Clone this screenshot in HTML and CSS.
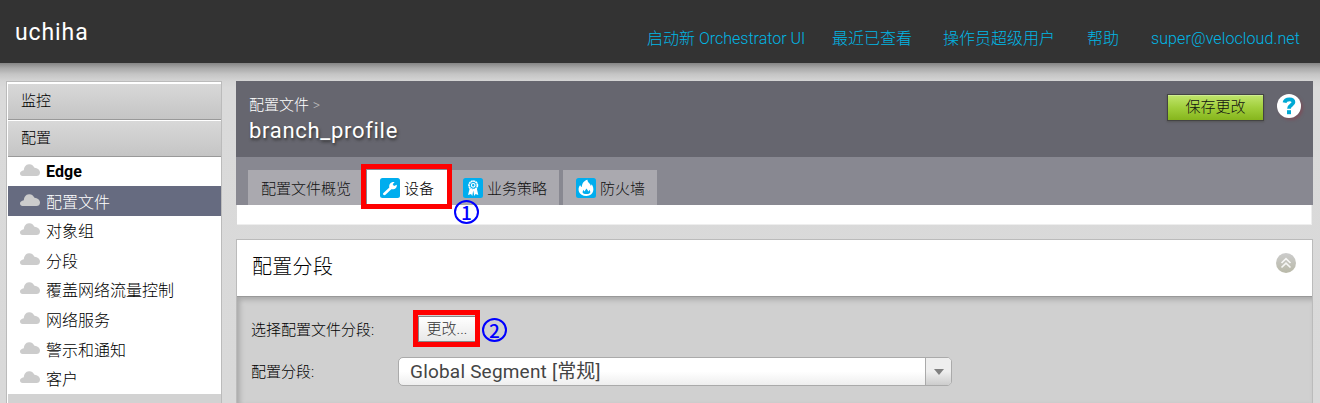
FILE: index.html
```html
<!DOCTYPE html>
<html lang="zh-CN">
<head>
<meta charset="utf-8">
<title>branch_profile</title>
<link rel="stylesheet" href="styles.css">
</head>
<body>
<svg class="defs" width="0" height="0">
  <symbol id="cloud" viewBox="0 0 20 12"><path d="M2.500 12C1 12 0 11 0 9.500C0 7.700 1.500 6.800 3.800 6.200C4.200 3.200 5.500 .5 9 .3C12 .2 13.300 1.800 14.500 3.800C17.500 4.200 20 5.800 20 8.500C20 11 18.500 12 16.500 12Z"/></symbol>
</svg>
<header class="topbar">
  <div class="brand">uchiha</div>
  <nav class="topnav">
    <a class="nav-ui">启动新 Orchestrator UI</a>
    <a class="nav-recent">最近已查看</a>
    <a class="nav-user">操作员超级用户</a>
    <a class="nav-help">帮助</a>
    <a class="nav-mail">super@velocloud.net</a>
  </nav>
</header>
<div class="layout">
  <aside class="sidebar">
    <div class="group">监控</div>
    <div class="group">配置</div>
    <ul class="menu">
      <li class="strong"><svg class="cloud"><use href="#cloud"/></svg><span>Edge</span></li>
      <li class="active"><svg class="cloud"><use href="#cloud"/></svg><span>配置文件</span></li>
      <li><svg class="cloud"><use href="#cloud"/></svg><span>对象组</span></li>
      <li><svg class="cloud"><use href="#cloud"/></svg><span>分段</span></li>
      <li><svg class="cloud"><use href="#cloud"/></svg><span>覆盖网络流量控制</span></li>
      <li><svg class="cloud"><use href="#cloud"/></svg><span>网络服务</span></li>
      <li><svg class="cloud"><use href="#cloud"/></svg><span>警示和通知</span></li>
      <li><svg class="cloud"><use href="#cloud"/></svg><span>客户</span></li>
    </ul>
    <div class="group"></div>
  </aside>
  <main class="main">
    <section class="profile">
      <div class="titlebar">
        <div class="titles">
          <div class="crumb">配置文件 <i>&gt;</i></div>
          <h1>branch_profile</h1>
        </div>
        <button class="save">保存更改</button>
        <span class="help">
          <svg width="24" height="24" viewBox="0 0 24 24"><circle cx="12" cy="12" r="12" fill="#fff"/><path d="M7.500 8.700C8 6 10 5.400 12.500 5.400C15 5.400 16.400 6.500 16.400 8.300C16.400 11.200 12 11 12 14.800" fill="none" stroke="#00a9d4" stroke-width="3.800"/><rect x="10" y="16.200" width="4" height="4" fill="#00a9d4"/></svg>
        </span>
      </div>
      <div class="tabs">
        <div class="tab overview"><span>配置文件概览</span></div>
        <div class="tab device">
          <svg class="ticon" viewBox="0 0 20 20"><rect width="20" height="20" rx="2.500" fill="#00adee"/><path d="M3.200 15.200L9.300 9.600C8.700 6.500 10.500 3.600 14.600 4L12.700 6.200L14 8L16.800 6.700C17.200 9.800 14.500 12 11.300 11.200L5.500 16.800C4.300 17.800 2.200 16.500 3.200 15.200Z" fill="#fff"/></svg>
          <span>设备</span>
        </div>
        <div class="tab policy">
          <svg class="ticon" viewBox="0 0 20 20"><rect width="20" height="20" rx="2.500" fill="#00adee"/><path d="M6.800 10L5 17L8 16L9.300 18L10.200 12.500L11.300 18L12.500 16L15.300 17L13.700 10Z" fill="#fff"/><circle cx="10.200" cy="7.300" r="4.200" fill="#00adee" stroke="#fff" stroke-width="1.700" stroke-dasharray="2 .4"/><circle cx="10.200" cy="7.300" r="1.800" fill="none" stroke="#fff" stroke-width="1.200"/></svg>
          <span>业务策略</span>
        </div>
        <div class="tab firewall">
          <svg class="ticon" viewBox="0 0 20 20"><rect width="20" height="20" rx="2.500" fill="#00adee"/><path d="M11.500 1.800C11.300 4.700 14.500 5.300 14.800 8C15.400 7.500 15.600 6.800 15.600 6.300C18.600 9.800 18.400 17.800 10.400 18C2.600 18 .8 10.800 4.200 7C4.500 8 5 8.800 5.800 9.100C6 5.500 8 2.500 11.500 1.800Z" fill="#fff"/><path d="M6.500 14.200L7.300 11.700L8.400 13.600L10.500 10.500L12.500 13.600L13.700 11.700L14.400 14.200C13.800 16.700 7 16.700 6.500 14.200Z" fill="#00adee"/></svg>
          <span>防火墙</span>
        </div>
      </div>
      <div class="tabbody"></div>
    </section>
    <section class="panel">
      <div class="panelhead">
        <h2>配置分段</h2>
        <svg width="20" height="20" viewBox="0 0 20 20"><defs><linearGradient id="cg" x2="0" y2="1"><stop stop-color="#ccc"/><stop offset="1" stop-color="#b9b9a8"/></linearGradient></defs><circle cx="10" cy="10" r="10" fill="url(#cg)"/><path d="M5.500 10L10 5.700L14.500 10M5.500 14.500L10 10.200L14.500 14.500" fill="none" stroke="#fff" stroke-opacity=".85" stroke-width="1.700"/></svg>
      </div>
      <div class="panelbody">
        <div class="row first"><label>选择配置文件分段:</label><button class="change">更改...</button></div>
        <div class="row"><label>配置分段:</label>
          <div class="select"><span>Global Segment [常规]</span><div class="arrow"><svg width="10" height="6"><path d="M0 0H10L5 6Z" fill="#808080"/></svg></div></div>
        </div>
      </div>
    </section>
  </main>
</div>
<div class="mark box1"></div>
<div class="mark box2"></div>
<div class="num num1"><span>1</span></div>
<div class="num num2"><span>2</span></div>
</body>
</html>
```
FILE: styles.css
```css
* { box-sizing: border-box; }
body {
  margin: 0;
  height: 403px;
  overflow: hidden;
  position: relative;
  background: #d9d9d9;
  color: #000;
  font-family: Roboto, "Noto Sans CJK SC", sans-serif;
  font-size: 15px;
  font-weight: 300;
}
.defs { position: absolute; }
h1, h2, ul { margin: 0; padding: 0; font-weight: 300; list-style: none; }
button { font-family: inherit; font-weight: inherit; padding: 0; margin: 0; white-space: nowrap; }
span, a, label { white-space: nowrap; }

.topbar {
  height: 63px;
  display: flex;
  justify-content: space-between;
  padding: 0 20px 0 15px;
  background: #333;
  color: #fff;
}
.brand { font-size: 23px; line-height: 66px; letter-spacing: 0.9px; font-weight: 400; }
.topnav { display: flex; line-height: 77px; font-size: 16px; color: #00b7e6; }
.nav-ui { width: 185px; }
.nav-recent { width: 111px; }
.nav-user { width: 144px; }
.nav-help { width: 64px; }
.nav-mail { width: 149px; letter-spacing: 0.1px; }

.layout {
  display: flex;
  height: 340px;
  overflow: hidden;
  padding: 18px 7px 0 6px;
  gap: 14px;
  background: linear-gradient(#858585 0, #a8a8a8 5px, #c4c4c4 11px, #d5d5d5 18px, #dadada 25px, #d9d9d9);
}

.sidebar { width: 216px; height: 322px; border: 1px solid #bbb; border-bottom: 0; background: #fff; padding: 1px 0 0 1px; display: flex; flex-direction: column; }
.group {
  height: 37px;
  flex: none;
  padding-left: 13px;
  line-height: 35px;
  border-top: 1px solid #fff;
  border-bottom: 1px solid #999;
  background: linear-gradient(#d8d8d8, #c5c5c5);
}
.group:last-child { height: auto; flex: 1; border: 0; background: #d2d2d2; }
.menu { font-size: 16px; height: 237px; display: grid; grid-template-rows: 29px 30px repeat(6, 29.6px); }
.menu li { display: flex; align-items: center; padding-left: 12px; gap: 6px; }
.menu span { margin-top: -1px; }
.menu .strong span { font-weight: 700; font-size: 16px; letter-spacing: 0.1px; margin-top: 0; }
.menu .active { background: #666b80; color: #fff; }
.cloud { width: 20px; height: 12px; fill: #ccc; margin-top: -3px; }

.main { width: 1077px; }
.titlebar {
  height: 76px;
  display: flex;
  background: #66666f;
  color: #fff;
  padding: 13px 12px 0 13px;
}
.titles { flex: 1; }
.crumb { height: 22px; line-height: 22px; }
.crumb i { font-style: normal; color: #bbb; font-size: 14px; }
h1 { font-size: 22px; line-height: 30px; letter-spacing: 0.7px; text-shadow: 1px 2px 3px #333; font-weight: 400; }
.save {
  width: 97px;
  height: 27px;
  font-size: 15px;
  line-height: 25px;
  color: #111;
  border: 1px solid #444;
  background: linear-gradient(#c0e56d, #a1cf3c 50%, #86b51d);
  box-shadow: inset 0 1px #cfee90, 0 1px 2px #555;
}
.help { width: 24px; height: 24px; margin-left: 13px; border-radius: 50%; box-shadow: 2px 2px 3px #79515c; }
.help svg { display: block; }
.tabs { height: 48px; display: flex; align-items: flex-end; padding-left: 12px; background: #888891; }
.tab { height: 35px; display: flex; align-items: center; color: #111; background: #aaa9af; }
.overview { width: 113px; padding-left: 13px; margin-right: 6px; }
.device { width: 80px; padding-left: 13px; margin-right: 4px; color: #000; background: #fff; }
.policy { width: 108px; padding-left: 12px; margin-right: 4px; }
.firewall { width: 94px; padding-left: 13px; }
.ticon { width: 20px; height: 20px; margin-right: 4px; }
.tabbody { height: 20px; margin: 0 1px; background: #fff; border-right: 1px solid #eee; border-bottom: 1px solid #eee; }

.panel { height: 164px; margin: 14px 0 0 0; border: 1px solid #bbb; border-bottom: 0; }
.panelhead { height: 56px; display: flex; justify-content: space-between; padding: 13px 16px 0 15px; background: #fff; }
h2 { font-size: 20px; line-height: 29px; letter-spacing: 0.3px; }
.panelbody {
  height: 107px;
  padding: 11px 14px 0;
  background: #d0d0d0;
  border-top: 1px solid #999;
  box-shadow: inset 3px 3px 5px #aaa;
}
.row { height: 42px; display: flex; align-items: center; }
label { width: 147px; margin-top: -2px; }
.first label { width: 167px; }
.change {
  width: 58px;
  height: 26px;
  font-size: 15px;
  line-height: 24px;
  color: #333;
  border: 1px solid #888;
  background: linear-gradient(#fff, #e8e8e8);
}
.select {
  width: 554px;
  height: 29px;
  margin-top: 1px;
  display: flex;
  justify-content: space-between;
  overflow: hidden;
  padding-left: 11px;
  font-size: 19px;
  line-height: 27px;
  font-weight: 400;
  letter-spacing: 0.2px;
  color: #444;
  border: 1px solid #aaa;
  border-radius: 5px;
  background: linear-gradient(#fff 50%, #eee);
}
.arrow {
  width: 26px;
  display: flex;
  align-items: center;
  justify-content: center;
  border-left: 1px solid #aaa;
  background: linear-gradient(#eee 50%, #ccc);
}

.mark { position: absolute; border: 5px solid #f00; }
.box1 { left: 361px; top: 164px; width: 91px; height: 45px; }
.box2 { left: 413px; top: 310px; width: 67px; height: 37px; }
.num {
  position: absolute;
  width: 25px;
  height: 24px;
  border: 2px solid #00f;
  border-radius: 50%;
  color: #00f;
  font: 500 19px/19px "Noto Sans CJK SC", sans-serif;
  text-align: center;
}
.num1 { left: 454px; top: 200px; }
.num2 { left: 482px; top: 318px; }
```
